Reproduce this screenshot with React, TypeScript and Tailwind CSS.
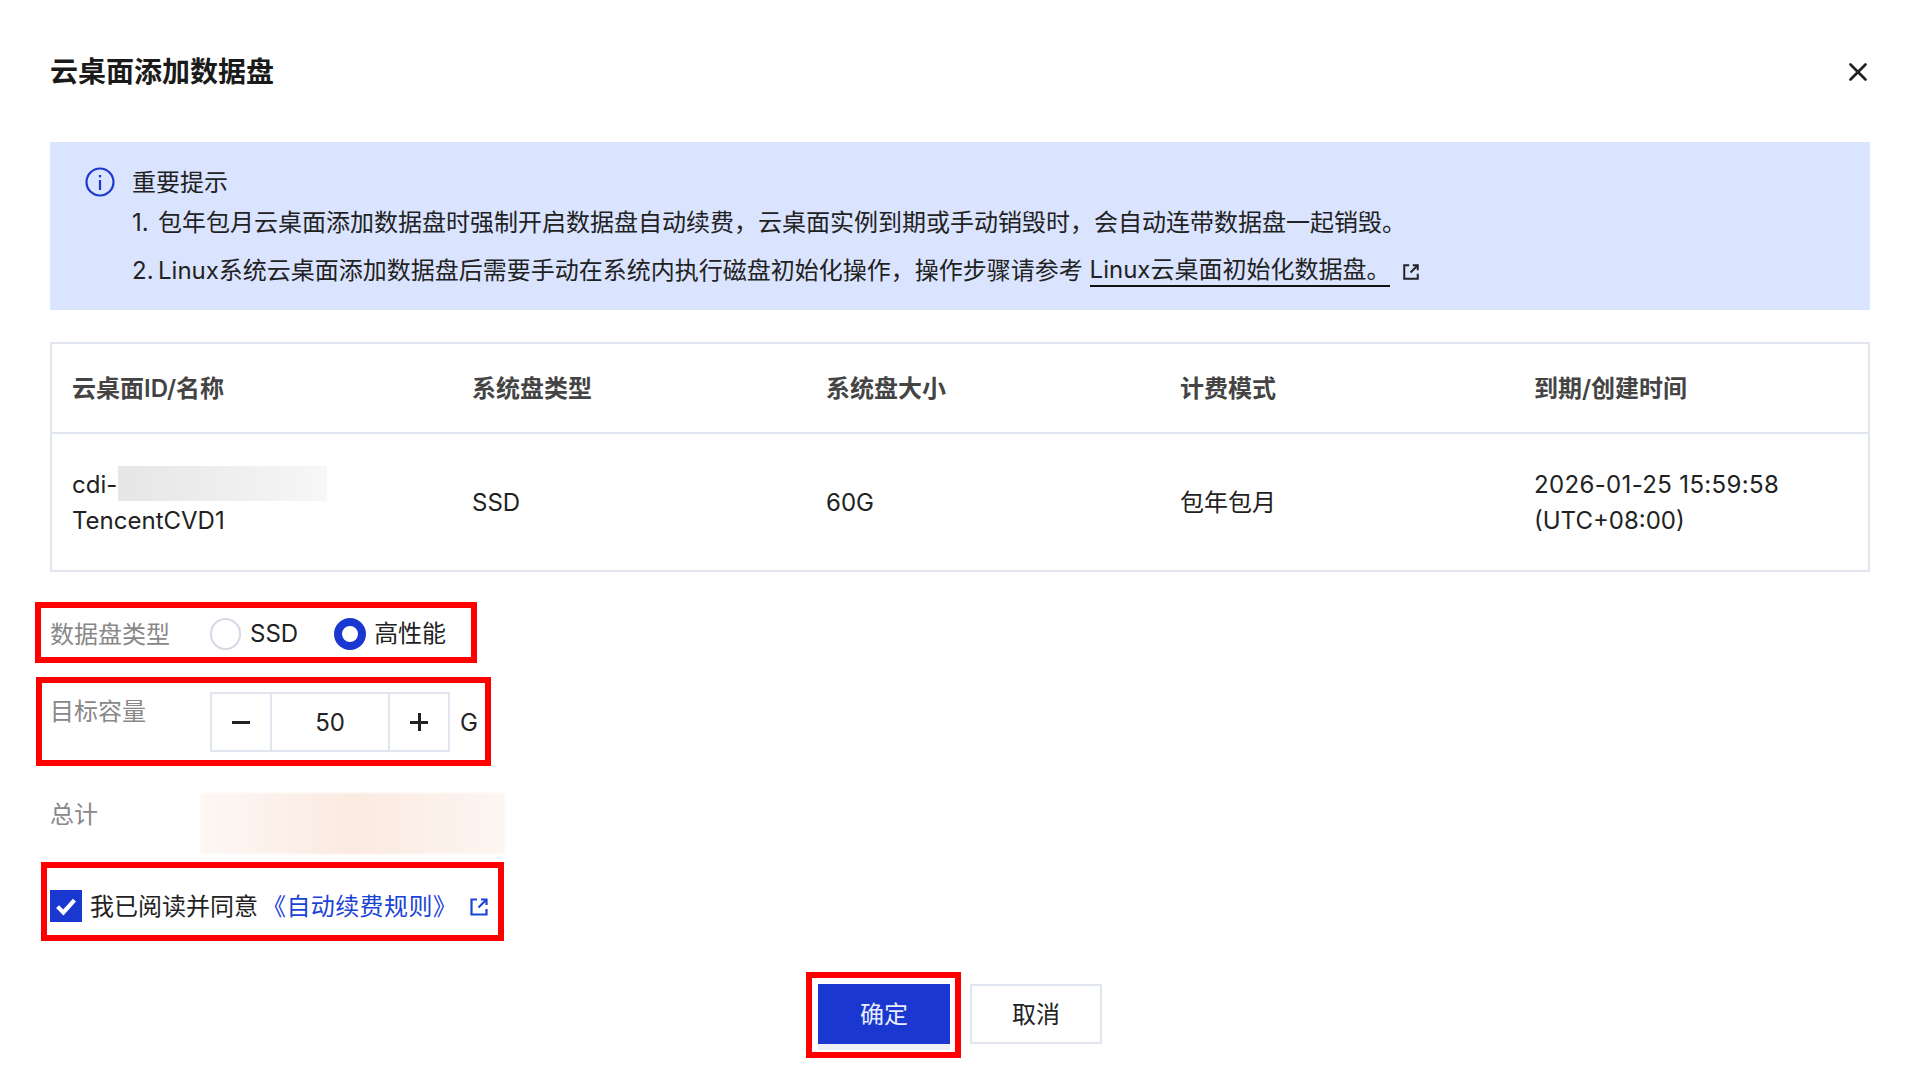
import { X } from 'lucide-react';

const FONT = "font-['Inter','Noto_Sans_CJK_SC',sans-serif]";

const COLUMNS = [
  { title: '云桌面ID/名称' },
  { title: '系统盘类型', value: 'SSD' },
  { title: '系统盘大小', value: '60G' },
  { title: '计费模式', value: '包年包月' },
  { title: '到期/创建时间' },
];

function ExternalIcon({ className }: { className: string }) {
  return (
    <svg viewBox="0 0 20 20" fill="none" stroke="currentColor" strokeWidth="2.2" className={className}>
      <path d="M8 2.5H2.5v15h15V12" />
      <path d="M12 2.5h5.5V8" />
      <path d="M17.5 2.5L9.5 10.5" />
    </svg>
  );
}

function Mark({ className }: { className: string }) {
  return <div className={`pointer-events-none absolute border-[6px] border-[#ff0000] ${className}`} />;
}

function Notice() {
  return (
    <div className="flex h-[168px] gap-[17px] bg-[#dbe4ff] pl-[35px] pt-[23px] text-[24px] leading-[36px] text-[#222222]">
      <svg viewBox="0 0 30 30" fill="none" className="mt-[2px] h-[30px] w-[30px] shrink-0 text-[#1a38d0]" stroke="currentColor">
        <circle cx="15" cy="15" r="13.5" strokeWidth="2.2" />
        <path d="M15 13v10" strokeWidth="2.2" />
        <path d="M15 8v2.4" strokeWidth="2.2" />
      </svg>
      <div>
        <div>重要提示</div>
        <div className="mt-[4px] flex">
          <span className="w-[26px]">1.</span>
          <span>包年包月云桌面添加数据盘时强制开启数据盘自动续费，云桌面实例到期或手动销毁时，会自动连带数据盘一起销毁。</span>
        </div>
        <div className="mt-[12px] flex items-center">
          <span className="w-[26px]">2.</span>
          <span>Linux系统云桌面添加数据盘后需要手动在系统内执行磁盘初始化操作，操作步骤请参考&nbsp;</span>
          <span className="border-b-2 border-[#111111] leading-[30px]">Linux云桌面初始化数据盘。</span>
          <ExternalIcon className="ml-[12px] mt-[2px] h-[18px] w-[18px] text-[#222222]" />
        </div>
      </div>
    </div>
  );
}

function DiskTable() {
  return (
    <div className="mt-[32px] border-2 border-[#e1e5f0] text-[24px] leading-[36px] text-[#222222]">
      <div className="grid h-[88px] grid-cols-[400px_354px_354px_354px_354px] items-center pt-[2px]">
        {COLUMNS.map((col) => (
          <div key={col.title} className="pl-[20px] font-semibold text-[#444444]">
            {col.title}
          </div>
        ))}
      </div>
      <div className="grid h-[138px] grid-cols-[400px_354px_354px_354px_354px] items-center border-t-2 border-[#e1e5f0] pt-[2px]">
        <div className="pl-[20px]">
          <div className="flex h-[36px] items-center">
            cdi-
            <div className="-mt-[3px] ml-[1px] h-[35px] w-[209px] bg-gradient-to-r from-[#e6e6e6] via-[#eeeeee] to-[#f7f7f7]" />
          </div>
          <div>TencentCVD1</div>
        </div>
        <div className="pl-[20px]">SSD</div>
        <div className="pl-[20px]">60G</div>
        <div className="pl-[20px]">包年包月</div>
        <div className="pl-[20px] tracking-[0.35px]">
          <div>2026-01-25 15:59:58</div>
          <div className="tracking-normal">(UTC+08:00)</div>
        </div>
      </div>
    </div>
  );
}

function DiskForm() {
  return (
    <div className="text-[24px] leading-[36px] text-[#222222]">
      <div className="relative mt-[44px] flex h-[36px] items-center">
        <Mark className="left-[-15px] top-[-14px] h-[61px] w-[442px]" />
        <div className="w-[160px] pt-[2px] text-[#888888]">数据盘类型</div>
        <div className="h-[32px] w-[31px] rounded-full border-2 border-[#d5d9e6] bg-white" />
        <span className="ml-[9px]">SSD</span>
        <div className="ml-[36px] h-[32px] w-[32px] rounded-full border-[8px] border-[#1a38d0] bg-white" />
        <span className="ml-[8px]">高性能</span>
      </div>

      <div className="relative mt-[40px] flex h-[60px]">
        <Mark className="left-[-14px] top-[-15px] h-[89px] w-[455px]" />
        <div className="w-[160px] pt-[2px] text-[#888888]">目标容量</div>
        <div className="flex h-[60px] w-[240px] border-2 border-[#e1e5f0]">
          <div className="flex w-[60px] items-center justify-center border-r-2 border-[#e1e5f0] text-[#222222]">
            <div className="h-[3px] w-[18px] bg-[#222222]" />
          </div>
          <div className="flex flex-1 items-center justify-center pt-[2px]">50</div>
          <div className="relative flex w-[60px] items-center justify-center border-l-2 border-[#e1e5f0]">
            <div className="h-[3px] w-[18px] bg-[#222222]" />
            <div className="absolute h-[18px] w-[3px] bg-[#222222]" />
          </div>
        </div>
        <div className="ml-[10px] flex items-center pt-[2px]">G</div>
      </div>

      <div className="mt-[41px] flex h-[61px]">
        <div className="mt-[4px] w-[150px] text-[#888888]">总计</div>
        <div className="h-[61px] w-[305px] bg-gradient-to-r from-[#fdf8f5] via-[#fbeae1] to-[#fdf6f2] blur-[1px]" />
      </div>

      <div className="relative mt-[36px] flex h-[32px] items-center">
        <Mark className="left-[-9px] top-[-28px] h-[79px] w-[463px]" />
        <div className="flex h-[32px] w-[32px] items-center justify-center bg-[#1a38d0]">
          <svg viewBox="0 0 20 20" fill="none" stroke="white" strokeWidth="3.2" className="h-[26px] w-[26px]">
            <path d="M3.5 10.5l4.5 4.5 8.5-9.5" />
          </svg>
        </div>
        <span className="ml-[8px] pt-[2px]">我已阅读并同意</span>
        <span className="ml-[4px] pt-[2px] tracking-[0.4px] text-[#1a44d8]">《自动续费规则》</span>
        <ExternalIcon className="ml-[12px] mt-[2px] h-[20px] w-[20px] text-[#1a44d8]" />
      </div>
    </div>
  );
}

export default function App() {
  return (
    <div className={`h-[1092px] w-[1918px] overflow-hidden bg-white pl-[50px] pr-[48px] ${FONT}`}>
      <div className="flex h-[142px] items-center justify-between pt-[2px]">
        <h1 className="text-[28px] font-bold text-[#1a1a1a]">云桌面添加数据盘</h1>
        <X className="mr-[-3px] h-[30px] w-[30px] text-[#222222]" strokeWidth={2.2} />
      </div>
      <Notice />
      <DiskTable />
      <DiskForm />
      <div className="mt-[62px] flex justify-center gap-[20px] text-[24px]">
        <div className="relative flex h-[60px] w-[132px] items-center justify-center bg-[#1a38d0] pt-[2px] text-[#e8edff] shadow-[0_6px_0_#eef0f8]">
          <Mark className="left-[-12px] top-[-12px] h-[86px] w-[155px]" />
          确定
        </div>
        <div className="flex h-[60px] w-[132px] items-center justify-center border-2 border-[#e1e5f0] bg-white pt-[2px] text-[#222222]">
          取消
        </div>
      </div>
    </div>
  );
}
